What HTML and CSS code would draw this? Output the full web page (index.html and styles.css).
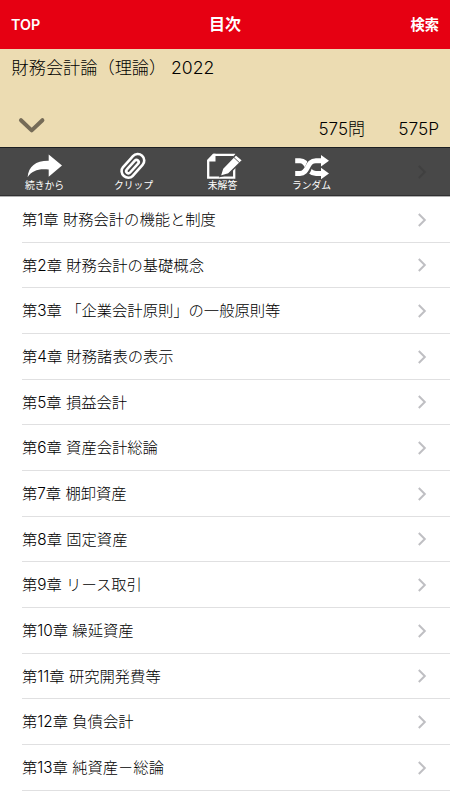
FILE: index.html
```html
<!DOCTYPE html>
<html lang="ja">
<head>
<meta charset="utf-8">
<title>目次</title>
<link rel="stylesheet" href="styles.css">
</head>
<body>
<header class="nav"><span class="nav-side">TOP</span><h1>目次</h1><span class="nav-side nav-right">検索</span></header>
<section class="book">
  <div class="book-title">財務会計論（理論） <span class="year">2022</span></div>
  <div class="book-foot">
    <svg class="expand" width="28" height="18" viewBox="0 0 28 18"><path d="M3 3.2 13.7 13.4 24.4 3.2" fill="none" stroke="#756b57" stroke-width="4" stroke-linecap="round" stroke-linejoin="round"/></svg>
    <span class="count">575問</span><span class="pages">575P</span>
  </div>
</section>
<nav class="tools">
  <div class="tool"><svg width="40" height="28" viewBox="0 0 40 28"><path d="M2.6 25.2C3.5 14 11 8.5 23.7 8.7V2.5L37 13.5 23.7 24.7V17.6C14 16.4 7 18.5 2.6 25.2Z" fill="#fff"/></svg><span>続きから</span></div>
  <div class="tool"><svg width="40" height="28" viewBox="0 0 40 28"><g transform="translate(18.8 14.2) rotate(42)" fill="none" stroke="#fff" stroke-width="2.6" stroke-linecap="round"><path d="M-6.6-5V7.5A6.4 5.6 0 0 0 6.4 7.5V-7.5A5 5 0 0 0-6.6-7.5V-4M-2.2 5V-5.5A2.1 2.1 0 0 1 2.2-5.5V6.5A2.2 2.2 0 0 1-2.2 6.5V5"/></g></svg><span>クリップ</span></div>
  <div class="tool"><svg width="40" height="28" viewBox="0 0 40 28"><path d="M10.5 2.8H31.2V25.6H5.2V8.5Z" fill="none" stroke="#fff" stroke-width="2.3"/><path d="M4.2 9.5 10.5 1.8H12.5V9.5Z" fill="#fff"/><path d="M17 24.5 19.5 16.5 33 2.6 39.6 8.2 25.5 22Z" fill="#fff" stroke="#484848" stroke-width="1.5"/><path d="M30.6 5.2 36.6 10.8" stroke="#484848" stroke-width=".9"/></svg><span>未解答</span></div>
  <div class="tool"><svg width="40" height="28" viewBox="0 0 40 28"><path d="M3.2 8.7H8C17 8.7 14 21.5 24 21.5H30" fill="none" stroke="#fff" stroke-width="5"/><path d="M12 21.5C18 20 15 8.7 24 8.7" fill="none" stroke="#484848" stroke-width="7"/><path d="M3.2 21.5H8C17 21.5 14 8.7 24 8.7H30" fill="none" stroke="#fff" stroke-width="5"/><path d="M29 3 37 8.7 29 14.5ZM29 15.7 37 21.5 29 27.3Z" fill="#fff"/></svg><span>ランダム</span></div>
  <svg class="faint" width="10" height="16" viewBox="0 0 10 16"><path d="M1.8 2 7.8 8 1.8 14"/></svg>
</nav>
<ul class="chapters">
  <li><span>第1章 財務会計の機能と制度</span><svg width="10" height="16" viewBox="0 0 10 16"><path d="M1.8 2 7.8 8 1.8 14"/></svg></li>
  <li><span>第2章 財務会計の基礎概念</span><svg width="10" height="16" viewBox="0 0 10 16"><path d="M1.8 2 7.8 8 1.8 14"/></svg></li>
  <li><span>第3章 「企業会計原則」の一般原則等</span><svg width="10" height="16" viewBox="0 0 10 16"><path d="M1.8 2 7.8 8 1.8 14"/></svg></li>
  <li><span>第4章 財務諸表の表示</span><svg width="10" height="16" viewBox="0 0 10 16"><path d="M1.8 2 7.8 8 1.8 14"/></svg></li>
  <li><span>第5章 損益会計</span><svg width="10" height="16" viewBox="0 0 10 16"><path d="M1.8 2 7.8 8 1.8 14"/></svg></li>
  <li><span>第6章 資産会計総論</span><svg width="10" height="16" viewBox="0 0 10 16"><path d="M1.8 2 7.8 8 1.8 14"/></svg></li>
  <li><span>第7章 棚卸資産</span><svg width="10" height="16" viewBox="0 0 10 16"><path d="M1.8 2 7.8 8 1.8 14"/></svg></li>
  <li><span>第8章 固定資産</span><svg width="10" height="16" viewBox="0 0 10 16"><path d="M1.8 2 7.8 8 1.8 14"/></svg></li>
  <li><span>第9章 リース取引</span><svg width="10" height="16" viewBox="0 0 10 16"><path d="M1.8 2 7.8 8 1.8 14"/></svg></li>
  <li><span>第10章 繰延資産</span><svg width="10" height="16" viewBox="0 0 10 16"><path d="M1.8 2 7.8 8 1.8 14"/></svg></li>
  <li><span>第11章 研究開発費等</span><svg width="10" height="16" viewBox="0 0 10 16"><path d="M1.8 2 7.8 8 1.8 14"/></svg></li>
  <li><span>第12章 負債会計</span><svg width="10" height="16" viewBox="0 0 10 16"><path d="M1.8 2 7.8 8 1.8 14"/></svg></li>
  <li><span>第13章 純資産－総論</span><svg width="10" height="16" viewBox="0 0 10 16"><path d="M1.8 2 7.8 8 1.8 14"/></svg></li>
</ul>
</body>
</html>
```
FILE: styles.css
```css
* { box-sizing: border-box; }
body {
  margin: 0;
  height: 800px;
  overflow: hidden;
  background: #fff;
  color: #000;
  font-family: Inter, "Noto Sans CJK JP", sans-serif;
}
.nav {
  height: 49px;
  padding: 0 11px;
  display: grid;
  grid-template-columns: 1fr auto 1fr;
  align-items: center;
  background: #e60012;
  color: #fff;
}
.nav h1 { margin: 0; padding-bottom: 1px; font-size: 16px; line-height: 24px; font-weight: 600; }
.nav-side { font-size: 14.3px; line-height: 20px; font-weight: 600; }
.nav-right { text-align: right; }
.book {
  height: 98px;
  padding: 6px 11px 7px;
  display: flex;
  flex-direction: column;
  justify-content: space-between;
  background: #ecdcb2;
}
.book-title { padding: 1px 0 0 .5px; font-size: 17.2px; line-height: 24px; font-weight: 300; white-space: pre; }
.year { font-size: 17.6px; }
.book-foot { display: flex; align-items: baseline; height: 24px; font-size: 17px; line-height: 25px; font-weight: 300; }
.expand { align-self: center; margin: -5px auto 0 7px; }
.pages { width: 74px; text-align: right; font-size: 17.3px; }
.tools {
  height: 50px;
  padding: 4px 0 0 21px;
  display: flex;
  background: #484848;
  border-top: 1px solid #1c1f22;
  border-bottom: 1px solid #b0b0b0;
  box-shadow: inset 0 -1px #303032;
}
.tool {
  width: 89px;
  color: #fff;
  display: flex;
  flex-direction: column;
}
.tool svg { margin-left: 4px; }
.tool span { width: 47px; text-align: center; font-size: 9.8px; line-height: 11px; font-weight: 400; white-space: nowrap; }
.faint { margin: 12px 0 0 40px; }
.chapters { list-style: none; margin: 0; padding: 0 0 0 22px; }
.chapters li {
  height: 45.67px;
  padding: 1px 23px 0 0;
  display: flex;
  align-items: center;
  justify-content: space-between;
  border-bottom: 1px solid #e0e0e1;
  font-size: 15.3px;
  line-height: 24px;
  font-weight: 300;
}
.chapters span { padding-top: .6px; }
.chapters path { fill: none; stroke: #bfbfc3; stroke-width: 2; }
.faint path { fill: none; stroke: #404040; stroke-width: 2; }
```
